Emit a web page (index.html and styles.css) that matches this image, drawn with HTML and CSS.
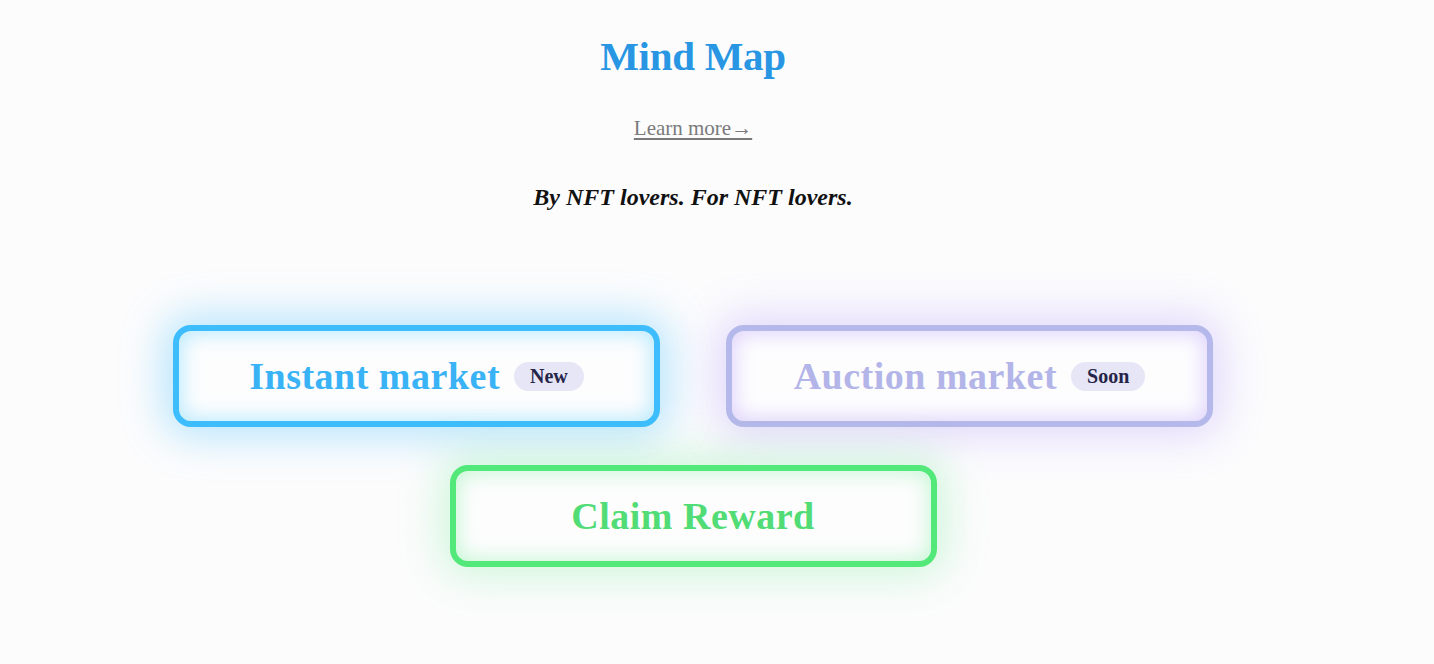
FILE: index.html
```html
<!DOCTYPE html>
<html lang="en">
<head>
<meta charset="utf-8">
<title>Mind Map</title>
<link rel="stylesheet" href="styles.css">
</head>
<body>
<main class="page">
  <h1 class="title">Mind Map</h1>
  <a class="learn" href="#">Learn more→</a>
  <p class="tagline">By NFT lovers. For NFT lovers.</p>
  <section class="map">
    <div class="row">
      <a class="node node-blue" href="#"><span class="label">Instant market</span><span class="badge">New</span></a>
      <a class="node node-purple" href="#"><span class="label">Auction market</span><span class="badge">Soon</span></a>
    </div>
    <div class="row">
      <a class="node node-green" href="#"><span class="label">Claim Reward</span></a>
    </div>
  </section>
</main>
</body>
</html>
```

FILE: styles.css
```css
html, body {
  margin: 0;
  padding: 0;
  background: #fcfcfd;
}
body {
  font-family: "Liberation Serif", "DejaVu Serif", serif;
  width: 1434px;
  height: 664px;
  overflow: hidden;
}
.page {
  width: 1386px;
  display: flex;
  flex-direction: column;
  align-items: center;
  padding-top: 30px;
}
.title {
  margin: 0;
  font-size: 41px;
  font-weight: 700;
  color: #2896e3;
  line-height: 52px;
  letter-spacing: -0.3px;
}
.learn {
  margin-top: 33px;
  font-size: 21px;
  color: #7a7a7a;
  text-decoration: underline;
  text-underline-offset: 3px;
  line-height: 26px;
}
.tagline {
  margin: 43px 0 0;
  font-size: 24px;
  font-style: italic;
  font-weight: 700;
  color: #111;
  line-height: 26px;
}
.map {
  margin-top: 115px;
  display: flex;
  flex-direction: column;
  align-items: center;
  gap: 38px;
}
.row {
  display: flex;
  gap: 66px;
}
.node {
  box-sizing: border-box;
  width: 487px;
  height: 102px;
  border: 6px solid;
  border-radius: 18px;
  display: flex;
  align-items: center;
  justify-content: center;
  gap: 14px;
  text-decoration: none;
  background: #fdfdfe;
  font-size: 38px;
  font-weight: 700;
  padding-top: 0;
}
.label {
  letter-spacing: 0.5px;
}
.badge {
  font-size: 20px;
  font-weight: 700;
  color: #25254a;
  background: #e6e6f6;
  border-radius: 15px;
  padding: 3px 16px 3px;
  line-height: 23px;
}
.node-blue {
  border-color: #3dbdfd;
  color: #39b3f5;
  box-shadow: 0 0 40px 10px rgba(61, 189, 253, 0.35), inset 0 0 20px 3px rgba(61, 200, 253, 0.35);
}
.node-purple {
  border-color: #b5b8ea;
  color: #b3b5e8;
  box-shadow: 0 0 40px 10px rgba(170, 140, 250, 0.3), inset 0 0 20px 3px rgba(180, 150, 250, 0.4);
}
.node-green {
  border-color: #52e97a;
  color: #52dc75;
  box-shadow: 0 0 40px 10px rgba(82, 233, 122, 0.25), inset 0 0 20px 3px rgba(82, 233, 122, 0.3);
}
```
